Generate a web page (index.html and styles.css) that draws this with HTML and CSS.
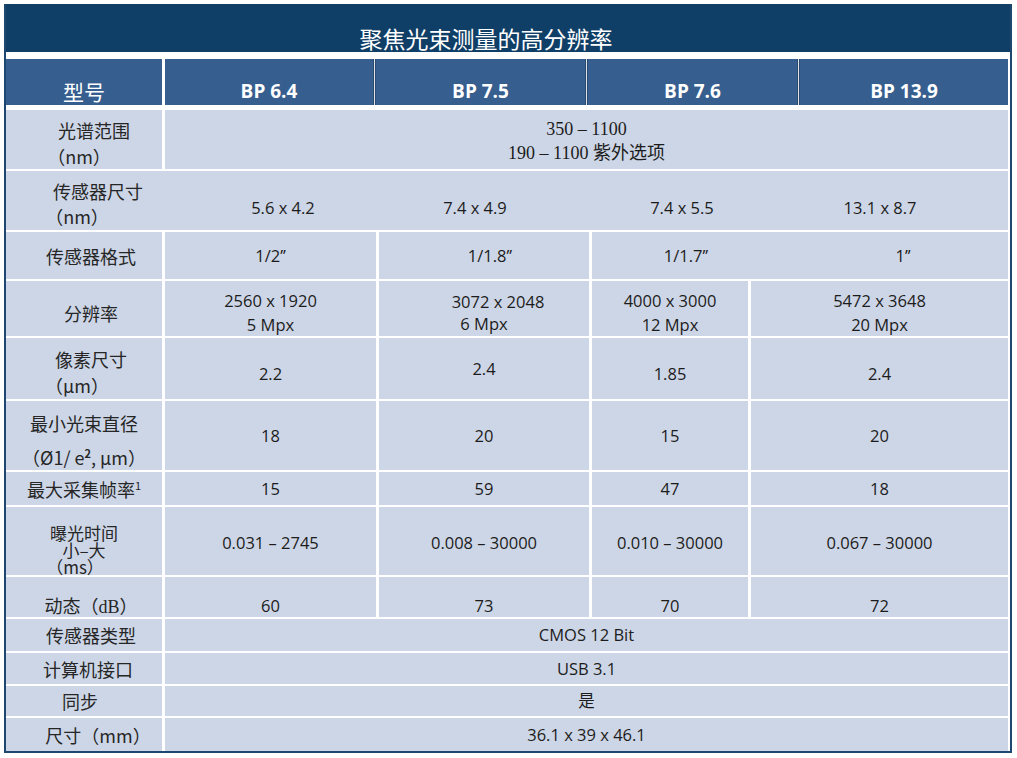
FILE: index.html
```html
<!DOCTYPE html>
<html lang="zh">
<head>
<meta charset="utf-8">
<title>聚焦光束测量的高分辨率</title>
<link rel="stylesheet" href="styles.css">
</head>
<body>
<div class="frame">
  <div class="title"><span>聚焦光束测量的高分辨率</span></div>

  <div class="row head">
    <div class="hc hlab">型号</div>
    <div class="hc">BP 6.4</div>
    <div class="hc sep">BP 7.5</div>
    <div class="hc sep">BP 7.6</div>
    <div class="hc sep">BP 13.9</div>
  </div>

  <div class="row d2 r1">
    <div class="cell lab"><span>光谱范围</span><span class="lpar">（nm）</span></div>
    <div class="cell val serif"><span>350 – 1100</span><span>190 – 1100 紫外选项</span></div>
  </div>

  <div class="row d2 r2">
    <div class="cell lab"><span>传感器尺寸</span><span class="lpar">（nm）</span></div>
    <div class="cell sizes">
      <span>5.6 x 4.2</span><span>7.4 x 4.9</span><span>7.4 x 5.5</span><span>13.1 x 8.7</span>
    </div>
  </div>

  <div class="row d4 r3">
    <div class="cell lab"><span>传感器格式</span></div>
    <div class="cell val"><span>1/2’’</span></div>
    <div class="cell val nudge"><span>1/1.8’’</span></div>
    <div class="cell formats"><span>1/1.7’’</span><span class="last">1’’</span></div>
  </div>

  <div class="row d5 r4">
    <div class="cell lab"><span>分辨率</span></div>
    <div class="cell val"><span>2560 x 1920</span><span>5 Mpx</span></div>
    <div class="cell val tight"><span class="shift">3072 x 2048</span><span>6 Mpx</span></div>
    <div class="cell val"><span>4000 x 3000</span><span>12 Mpx</span></div>
    <div class="cell val"><span>5472 x 3648</span><span>20 Mpx</span></div>
  </div>

  <div class="row d5 r5">
    <div class="cell lab"><span>像素尺寸</span><span class="lpar">（μm）</span></div>
    <div class="cell val"><span>2.2</span></div>
    <div class="cell val up"><span>2.4</span></div>
    <div class="cell val"><span>1.85</span></div>
    <div class="cell val"><span>2.4</span></div>
  </div>

  <div class="row d5 r6">
    <div class="cell lab wide"><span>最小光束直径</span><span class="second">（Ø1/ e<sup class="sq">2</sup>, μm）</span></div>
    <div class="cell val"><span>18</span></div>
    <div class="cell val"><span>20</span></div>
    <div class="cell val"><span>15</span></div>
    <div class="cell val"><span>20</span></div>
  </div>

  <div class="row d5 r7">
    <div class="cell lab wide"><span>最大采集帧率<sup class="fn">1</sup></span></div>
    <div class="cell val"><span>15</span></div>
    <div class="cell val"><span>59</span></div>
    <div class="cell val"><span>47</span></div>
    <div class="cell val"><span>18</span></div>
  </div>

  <div class="row d5 r8">
    <div class="cell lab small"><span>曝光时间</span><span>小–大</span><span class="lpar">（ms）</span></div>
    <div class="cell val"><span>0.031 – 2745</span></div>
    <div class="cell val"><span>0.008 – 30000</span></div>
    <div class="cell val"><span>0.010 – 30000</span></div>
    <div class="cell val"><span>0.067 – 30000</span></div>
  </div>

  <div class="row d5 r9">
    <div class="cell lab"><span>动态（<span class="serif">dB</span>）</span></div>
    <div class="cell val"><span>60</span></div>
    <div class="cell val"><span>73</span></div>
    <div class="cell val"><span>70</span></div>
    <div class="cell val"><span>72</span></div>
  </div>

  <div class="row d2 r10">
    <div class="cell lab"><span>传感器类型</span></div>
    <div class="cell val"><span>CMOS 12 Bit</span></div>
  </div>

  <div class="row d2 r11">
    <div class="cell lab"><span>计算机接口</span></div>
    <div class="cell val"><span>USB 3.1</span></div>
  </div>

  <div class="row d2 r12">
    <div class="cell lab narrow"><span>同步</span></div>
    <div class="cell val"><span>是</span></div>
  </div>

  <div class="row d2 r13">
    <div class="cell lab"><span>尺寸（mm）</span></div>
    <div class="cell val"><span>36.1 x 39 x 46.1</span></div>
  </div>
</div>
</body>
</html>
```

FILE: styles.css
```css
html, body {
  margin: 0;
  padding: 0;
  background: #ffffff;
}

body {
  font-family: "Open Sans", "Noto Sans CJK SC", sans-serif;
  color: #1c1c1c;
}

.frame {
  margin: 4px 0 0 4px;
  width: 1004px;
  border-left: 2px solid #1d4670;
  border-right: 2px solid #1d4670;
  border-bottom: 2px solid #1d4670;
  background: #ffffff;
}

.title {
  height: 48px;
  background: #0f3e66;
  color: #ffffff;
  font-family: "Noto Sans CJK SC", sans-serif;
  font-size: 23px;
  display: flex;
  align-items: center;
  justify-content: center;
  padding: 20px 44px 0 0;
  box-sizing: border-box;
  margin-bottom: 7px;
  line-height: 28px;
}

.row {
  display: grid;
  column-gap: 3px;
  width: 1002px;
  margin-bottom: 2px;
  grid-template-rows: minmax(0, 1fr);
}

.head {
  grid-template-columns: 156px 208px 209px 209px 208px;
  height: 46px;
  margin-bottom: 5px;
}

.d2 { grid-template-columns: 156px 843px; }
.d4 { grid-template-columns: 156px 211px 210px 416px; }
.d5 { grid-template-columns: 156px 211px 210px 156px 257px; }

.hc {
  background: #365e8e;
  color: #ffffff;
  font-weight: 700;
  font-size: 19px;
  display: flex;
  align-items: center;
  justify-content: center;
  padding-top: 18px;
  box-sizing: border-box;
  line-height: 28px;
}

.hc.sep {
  box-shadow: -1px 0 0 #29496f, -2px 0 0 #dfe4ec, -3px 0 0 #29496f;
}

.hlab {
  font-family: "Noto Sans CJK SC", sans-serif;
  font-weight: 400;
  font-size: 21px;
}

.cell {
  background: #cdd6e6;
  display: flex;
  flex-direction: column;
  align-items: center;
  justify-content: center;
  text-align: center;
  box-sizing: border-box;
  min-height: 0;
}

.lab {
  font-family: "Noto Sans CJK SC", sans-serif;
  font-size: 18px;
  color: #262626;
  padding-left: 14px;
  line-height: 26px;
}

.lab.wide { padding-left: 0; }
.lab.narrow { padding-left: 0; padding-right: 8px; }
.lab.small { font-size: 17px; line-height: 17px; padding-left: 0; }

.val {
  font-size: 16.5px;
  line-height: 24px;
  color: #1c1c1c;
}

.serif {
  font-family: "Liberation Serif", "Noto Sans CJK SC", serif;
  font-size: 18px;
}

.sq { font-weight: 700; font-size: 11px; line-height: 0; }
.fn { font-size: 11px; line-height: 0; }

/* row heights and vertical offsets */
.r1 { height: 59px; }
.r1 .lab { padding-top: 7px; padding-left: 20px; }
.r1 .lpar { margin-right: 30px; }
.r1 .val { padding-top: 3px; }

.r2 { height: 59px; background: #cdd6e6; }
.r2 .lab { padding-top: 6px; padding-left: 28px; line-height: 25px; }
.r2 .lpar { margin-right: 42px; }

.sizes {
  display: grid;
  grid-template-columns: 236px 148px 266px 130px;
  justify-content: start;
  align-items: center;
  justify-items: center;
  font-size: 16.5px;
  padding-top: 13px;
  text-align: center;
}

.r3 { height: 47px; }
.nudge { padding-left: 12px; }

.formats {
  display: grid;
  grid-template-columns: 188px 1fr;
  justify-content: start;
  align-items: center;
  justify-items: center;
  font-size: 16.5px;
}
.formats .last { padding-left: 18px; }

.r4 { height: 55px; }
.r4 .lab { padding-top: 9px; }
.r4 .val { padding-top: 8px; }
.r4 .tight { line-height: 22px; }
.shift { padding-left: 28px; }

.r5 { height: 61px; }
.r5 .lab { padding-top: 7px; }
.r5 .lpar { margin-right: 28px; }
.r5 .val { padding-top: 11px; }
.r5 .val.up { padding-top: 1px; }

.r6 { height: 69px; }
.r6 .lab { padding-top: 9px; line-height: 26px; }
.r6 .second { margin-top: 8px; }

.r7 { height: 33px; }

.r8 { height: 68px; }
.r8 .lab { padding-top: 16px; }
.r8 .lpar { margin-right: 18px; }
.r8 .val { padding-top: 4px; }

.r9 { height: 40px; }
.r9 .cell { padding-top: 17px; }

.r10 { height: 32px; }
.r11 { height: 31px; }
.r11 .lab { padding-left: 8px; }
.r12 { height: 30px; }
.r13 { height: 33px; margin-bottom: 0; }
.r13 .lab { padding-left: 28px; }
```
